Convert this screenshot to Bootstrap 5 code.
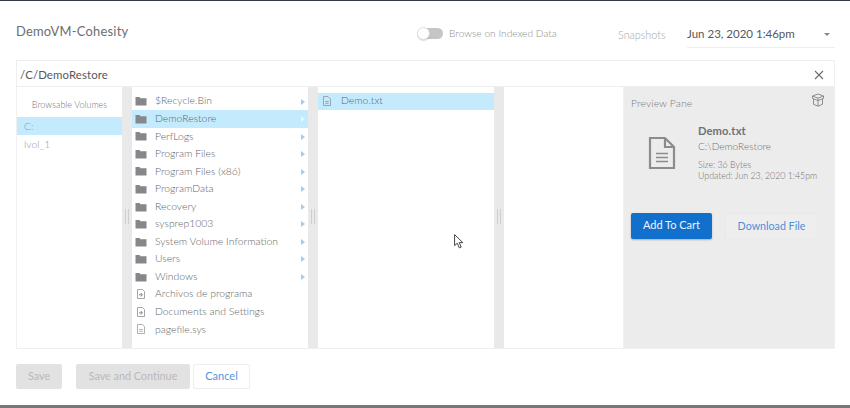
<!DOCTYPE html>
<html lang="en">
<head>
<meta charset="utf-8">
<title>DemoVM-Cohesity</title>
<link href="https://cdn.jsdelivr.net/npm/bootstrap@5.3.0/dist/css/bootstrap.min.css" rel="stylesheet">
<style>
html,body{height:408px;overflow:hidden;background:#fff}
body{font-family:Lato,"Open Sans",sans-serif;color:#6f7276;font-size:11px;font-weight:300;position:relative}
.shell{height:408px;border-top:1px solid #333a42;border-bottom:3px solid #777;padding:0 15px 0 16px;display:flex;flex-direction:column}
.topline{height:59px;display:flex;align-items:center;flex:none}
.dlg-title{font-size:12.9px;letter-spacing:.25px;color:#6b6e72;margin-top:2px;width:140px;flex:none;white-space:nowrap;font-weight:400}
.toggler{width:25px;height:11px;flex:none;border-radius:6px;background:#c3c5c7;position:relative;margin-left:262px;margin-top:6px}
.toggler i{position:absolute;left:-1px;top:-1px;width:13px;height:13px;border-radius:50%;background:#fff;border:1px solid #ddd;box-shadow:0 1px 1px #0002}
.tog-label{margin-left:6px;font-size:10.2px;color:#8d8f92;margin-top:6px;width:169px;flex:none}
.snap{font-size:10.8px;color:#a3a5a8;width:69px;flex:none;margin-top:10px}
.snap-sel{width:148px;flex:none;height:27px;border-bottom:1px solid #eee;display:flex;align-items:center;justify-content:space-between;font-size:11.5px;color:#55585b;padding-right:5px;margin-top:8px;font-weight:400}
.snap-sel b{border-top:3px solid #888;border-left:3px solid transparent;border-right:3px solid transparent}
.browser{height:289px;border:1px solid #efefef;display:flex;flex-direction:column;flex:none}
.pathbar{height:26px;flex:none;display:flex;align-items:center;justify-content:space-between;padding:2px 10px 0 3px;border-bottom:1px solid #eee;font-size:11.4px;color:#55585b;letter-spacing:.12px;font-weight:400}
.panes{flex:1;display:flex;min-height:0}
.vols{width:105px;flex:none}
.vols .vh{height:30px;display:flex;align-items:center;justify-content:center;font-size:9px;color:#77797c;padding-top:6px}
.split{width:9.5px;flex:none;background:#e9e9e9;display:flex;align-items:center;justify-content:center;gap:2px;padding-bottom:3px}
.split i{width:1px;height:15px;background:#cfcfcf}
.lst{flex:none;padding-top:5.5px}
.c2{width:176.5px}.c3{width:176.500px}.c4{width:120.500px;border-right:1px solid #f1f1f1}
.itm{height:17.56px;display:flex;align-items:center;font-size:10.4px;color:#606366;padding-left:3px;position:relative;white-space:nowrap}
.itm.sel{background:#c4eafd}
.itm svg.ic{width:12px;height:12px;flex:none;margin-right:8.5px}
.itm .ar{position:absolute;right:3px;top:6px;border-left:4px solid #a5cdea;border-top:3px solid transparent;border-bottom:3px solid transparent}
.itm.sel .ar{border-left-color:#e8f7ff}
.vitm{height:18px;display:flex;align-items:center;padding:2px 0 0 7px;font-size:10.4px;color:#95979a}
.vitm.itm{color:#95979a;padding-left:7px}
.preview{flex:1;background:#ececec;position:relative;padding:9px 7px}
.pv-h{font-size:10.4px;color:#77797c;letter-spacing:.1px}
.pv-box{position:absolute;right:9px;top:6px;width:14px;height:14px}
.pv-body{display:flex;padding:12px 0 0 17px;height:101px}
.pv-body svg{width:28px;height:34px;margin-top:12px;margin-right:22px;flex:none}
.pv-name{font-size:11.2px;font-weight:700;color:#6f7276;line-height:14px;letter-spacing:.1px}
.pv-path{font-size:10.1px;color:#6f7276;line-height:17px}
.pv-meta{font-size:8.8px;color:#6f7276;line-height:11.3px;margin-top:4px}
.btn.cart{background:#1270cd;border:0;color:#eef5fc;font-size:11px;width:81px;height:26px;padding:0;border-radius:2px;box-shadow:0 1px 2px #0004;font-weight:400}
.btn.dl{background:#eeeeee;border:1px solid #e9e9e9;color:#4f8fd6;font-size:10.7px;width:93px;height:26px;padding:0;border-radius:2px;margin-left:13px;font-weight:400}
.foot{flex:none;display:flex;margin-top:15px}
.btn.off{background:#e2e2e2;border:0;color:#b9b9b9;font-size:10.8px;height:25px;padding:0;border-radius:2px;opacity:1;font-weight:400}
.btn.cancel{background:#fff;border:1px solid #eee;color:#4f97de;font-size:11px;height:25px;width:57px;padding:0;border-radius:2px;margin-left:3px;font-weight:400}
.cursor{position:absolute;left:454px;top:234px;width:10px;height:15px}
</style>
</head>
<body>
<div class="shell">
  <div class="topline">
    <div class="dlg-title">DemoVM-Cohesity</div>
    <div class="toggler"><i></i></div>
    <div class="tog-label">Browse on Indexed Data</div>
    <div class="snap">Snapshots</div>
    <div class="snap-sel"><span>Jun 23, 2020 1:46pm</span><b></b></div>
  </div>
  <div class="browser">
    <div class="pathbar"><span>/C/DemoRestore</span>
      <svg width="10" height="10" viewBox="0 0 10 10"><path d="M1 1l8 8M9 1l-8 8" stroke="#6b6e72" stroke-width="1.1" fill="none"/></svg>
    </div>
    <div class="panes">
      <div class="vols">
        <div class="vh">Browsable Volumes</div>
        <div class="vitm sel itm">C:</div>
        <div class="vitm">lvol_1</div>
      </div>
      <div class="split"><i></i><i></i></div>
      <div class="lst c2" id="c2"></div>
      <div class="split"><i></i><i></i></div>
      <div class="lst c3">
        <div class="itm sel"><svg class="ic" viewBox="0 0 12 12"><path d="M2.500 1.500h4.500l2.500 2.500v6.500h-7zM4.300 6.500h3.400M4.300 8.300h3.400" fill="none" stroke="#9a9da0" stroke-width=".9"/></svg><span>Demo.txt</span></div>
      </div>
      <div class="split"><i></i><i></i></div>
      <div class="c4"></div>
      <div class="preview">
        <div class="pv-h">Preview Pane</div>
        <svg class="pv-box" viewBox="0 0 14 14" fill="none" stroke="#8b8e91" stroke-width="1"><path d="M7 1l5.500 2v2.500L7 7.500 1.500 5.500V3zM1.500 3L7 5.200 12.500 3M7 5.200v8M2.500 6v5.300L7 13.200l4.500-1.900V6"/></svg>
        <div class="pv-body">
          <svg viewBox="0 0 28 34" fill="none" stroke="#8a8c8f" stroke-width="2.200"><path d="M2 2h15l9 9v21H2zM17 2v9h9"/><path d="M8 17.500h12M8 21.500h12M8 25.500h12" stroke-width="1.700"/></svg>
          <div>
            <div class="pv-name">Demo.txt</div>
            <div class="pv-path">C:\DemoRestore</div>
            <div class="pv-meta">Size: 36 Bytes<br>Updated: Jun 23, 2020 1:45pm</div>
          </div>
        </div>
        <div class="d-flex">
          <button class="btn cart">Add To Cart</button>
          <button class="btn dl">Download File</button>
        </div>
      </div>
    </div>
  </div>
  <div class="foot">
    <button class="btn off" disabled style="width:46px">Save</button>
    <button class="btn off" disabled style="width:114px;margin-left:14px">Save and Continue</button>
    <button class="btn cancel">Cancel</button>
  </div>
</div>
<svg class="cursor" viewBox="0 0 10 15"><path d="M.6.6v11l2.700-2.400 2 4.700 1.900-.8-2-4.500h3.600z" fill="#fff" stroke="#444" stroke-width="1"/></svg>
<script>
var folder='<svg class="ic" viewBox="0 0 12 12"><path d="M.5 2h4l1 1.200h6V10.500H.5z" fill="#85878a"/></svg>';
var link='<svg class="ic" viewBox="0 0 12 12"><path d="M2.500 1.500h5l2 2v7h-7z" fill="none" stroke="#9a9da0" stroke-width=".9"/><path d="M4 6.800h3M5.800 5l1.600 1.800-1.600 1.700" fill="none" stroke="#77797c" stroke-width=".9"/></svg>';
var file='<svg class="ic" viewBox="0 0 12 12"><path d="M2.500 1.500h5l2 2v7h-7zM4.300 6.500h3.400M4.300 8.300h3.400" fill="none" stroke="#a6a8ab" stroke-width=".9"/></svg>';
var rows=[["$Recycle.Bin",folder,1],["DemoRestore",folder,1,1],["PerfLogs",folder,1],["Program Files",folder,1],["Program Files (x86)",folder,1],["ProgramData",folder,1],["Recovery",folder,1],["sysprep1003",folder,1],["System Volume Information",folder,1],["Users",folder,1],["Windows",folder,1],["Archivos de programa",link],["Documents and Settings",link],["pagefile.sys",file]];
document.getElementById('c2').innerHTML=rows.map(function(r){return '<div class="itm'+(r[3]?' sel':'')+'">'+r[1]+'<span>'+r[0]+'</span>'+(r[2]?'<span class="ar"></span>':'')+'</div>';}).join('');
</script>
</body>
</html>
